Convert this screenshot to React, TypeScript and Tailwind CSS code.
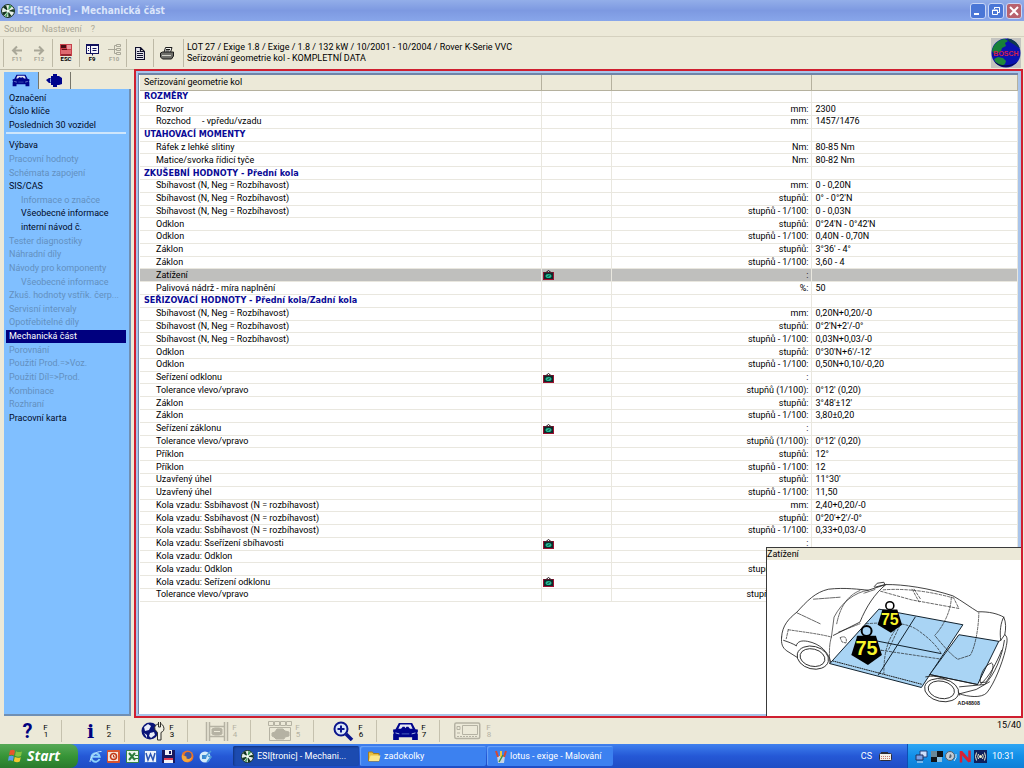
import type { ReactNode } from "react";

type Row = { head?: string; label?: string; icon?: boolean; unit?: string; value?: string; selected?: boolean };

const rows: Row[] = [
  { head: "ROZMĚRY" },
  { label: "Rozvor", unit: "mm:", value: "2300" },
  { label: "Rozchod\u00a0\u00a0\u00a0\u00a0 - vpředu/vzadu", unit: "mm:", value: "1457/1476" },
  { head: "UTAHOVACÍ MOMENTY" },
  { label: "Ráfek z lehké slitiny", unit: "Nm:", value: "80-85 Nm" },
  { label: "Matice/svorka řídicí tyče", unit: "Nm:", value: "80-82 Nm" },
  { head: "ZKUŠEBNÍ HODNOTY - Přední kola" },
  { label: "Sbíhavost (N, Neg = Rozbíhavost)", unit: "mm:", value: "0 - 0,20N" },
  { label: "Sbíhavost (N, Neg = Rozbíhavost)", unit: "stupňů:", value: "0° - 0°2'N" },
  { label: "Sbíhavost (N, Neg = Rozbíhavost)", unit: "stupňů - 1/100:", value: "0 - 0,03N" },
  { label: "Odklon", unit: "stupňů:", value: "0°24'N - 0°42'N" },
  { label: "Odklon", unit: "stupňů - 1/100:", value: "0,40N - 0,70N" },
  { label: "Záklon", unit: "stupňů:", value: "3°36' - 4°" },
  { label: "Záklon", unit: "stupňů - 1/100:", value: "3,60 - 4" },
  { label: "Zatížení", icon: true, unit: ":", selected: true },
  { label: "Palivová nádrž - míra naplnění", unit: "%:", value: "50" },
  { head: "SEŘIZOVACÍ HODNOTY - Přední kola/Zadní kola" },
  { label: "Sbíhavost (N, Neg = Rozbíhavost)", unit: "mm:", value: "0,20N+0,20/-0" },
  { label: "Sbíhavost (N, Neg = Rozbíhavost)", unit: "stupňů:", value: "0°2'N+2'/-0°" },
  { label: "Sbíhavost (N, Neg = Rozbíhavost)", unit: "stupňů - 1/100:", value: "0,03N+0,03/-0" },
  { label: "Odklon", unit: "stupňů:", value: "0°30'N+6'/-12'" },
  { label: "Odklon", unit: "stupňů - 1/100:", value: "0,50N+0,10/-0,20" },
  { label: "Seřízení odklonu", icon: true, unit: ":" },
  { label: "Tolerance vlevo/vpravo", unit: "stupňů (1/100):", value: "0°12' (0,20)" },
  { label: "Záklon", unit: "stupňů:", value: "3°48'±12'" },
  { label: "Záklon", unit: "stupňů - 1/100:", value: "3,80±0,20" },
  { label: "Seřízení záklonu", icon: true, unit: ":" },
  { label: "Tolerance vlevo/vpravo", unit: "stupňů (1/100):", value: "0°12' (0,20)" },
  { label: "Příklon", unit: "stupňů:", value: "12°" },
  { label: "Příklon", unit: "stupňů - 1/100:", value: "12" },
  { label: "Uzavřený úhel", unit: "stupňů:", value: "11°30'" },
  { label: "Uzavřený úhel", unit: "stupňů - 1/100:", value: "11,50" },
  { label: "Kola vzadu: Ssbíhavost (N = rozbíhavost)", unit: "mm:", value: "2,40+0,20/-0" },
  { label: "Kola vzadu: Ssbíhavost (N = rozbíhavost)", unit: "stupňů:", value: "0°20'+2'/-0°" },
  { label: "Kola vzadu: Ssbíhavost (N = rozbíhavost)", unit: "stupňů - 1/100:", value: "0,33+0,03/-0" },
  { label: "Kola vzadu: Sseřízení sbíhavosti", icon: true, unit: ":" },
  { label: "Kola vzadu: Odklon" },
  { label: "Kola vzadu: Odklon", unit: "stupňů - 1/100:" },
  { label: "Kola vzadu: Seřízení odklonu", icon: true },
  { label: "Tolerance vlevo/vpravo", unit: "stupňů (1/100):" },
];

type NavItem = { text: string; on?: boolean; sub?: boolean; active?: boolean };

const shortcuts: NavItem[] = [
  { text: "Označení", on: true },
  { text: "Číslo klíče", on: true },
  { text: "Posledních 30 vozidel", on: true },
];

const sections: NavItem[] = [
  { text: "Výbava", on: true },
  { text: "Pracovní hodnoty" },
  { text: "Schémata zapojení" },
  { text: "SIS/CAS", on: true },
  { text: "Informace o značce", sub: true },
  { text: "Všeobecné informace", on: true, sub: true },
  { text: "interní návod č.", on: true, sub: true },
  { text: "Tester diagnostiky" },
  { text: "Náhradní díly" },
  { text: "Návody pro komponenty" },
  { text: "Všeobecné informace", sub: true },
  { text: "Zkuš. hodnoty vstřik. čerp..." },
  { text: "Servisní intervaly" },
  { text: "Opotřebitelné díly" },
  { text: "Mechanická část", on: true, active: true },
  { text: "Porovnání" },
  { text: "Použití Prod.=>Voz." },
  { text: "Použití Díl=>Prod." },
  { text: "Kombinace" },
  { text: "Rozhraní" },
  { text: "Pracovní karta", on: true },
];

function NavList({ items }: { items: NavItem[] }) {
  return (
    <>
      {items.map((it, i) => (
        <li key={i} className="flex flex-1">
          <button
            type="button"
            disabled={!it.on}
            className={`flex w-full items-center text-left leading-[13px] whitespace-nowrap ${it.sub ? "pl-[15px]" : "pl-[3px]"} ${
              it.active ? "bg-[#00007f] text-white" : it.on ? "text-[#000a28]" : "text-[#6390c0]"
            }`}
          >
            {it.text}
          </button>
        </li>
      ))}
    </>
  );
}

function DiscIcon({ size }: { size: number }) {
  return (
    <svg width={size} height={size} viewBox="0 0 14 14" aria-hidden="true">
      <circle cx="7" cy="7" r="6.5" fill="#e6eee8" stroke="#17321f" strokeWidth="1" />
      <path d="M7 7 2 3.500A6 6 0 0 1 5 1.300ZM7 7l5.500-2A6 6 0 0 1 13 8ZM7 7l3.500 5A6 6 0 0 1 7.500 13ZM7 7 3 11.500A6 6 0 0 1 1 8.500Z" fill="#12331c" />
      <path d="M7 7 8 1a6 6 0 0 1 3 1.500ZM7 7l-1 6a6 6 0 0 1-2-1Z" fill="#3c9a55" />
      <circle cx="7" cy="7" r="1.500" fill="#f5fff5" />
    </svg>
  );
}

function CarFront({ className }: { className: string }) {
  return (
    <svg className={className} viewBox="0 0 28 20" aria-hidden="true">
      <path d="M7 1h14l3.500 6.500L27 8v3h-1l1 2v6h-6v-3H7v3H1v-6l1-2H1V8l2.500-.5Z" fill="#00058c" />
      <path d="M8.500 2.500h11L21.500 7h-15Z" fill="#e4e7f2" />
      <path d="M9 7.500l2-2.500h2l1 1.500L15 5h2l2 2.500Z" fill="#00058c" />
      <path d="M3.500 11.500l4 1M24.500 11.500l-4 1" stroke="#a9b9ea" strokeWidth="1" />
      <path d="M10 12.500h8" stroke="#4a62c0" strokeWidth="1" />
    </svg>
  );
}

function PartIcon() {
  return (
    <svg className="h-[13px] w-[17px]" viewBox="0 0 17 13" aria-hidden="true">
      <path d="M0 6l3-2h2V2h2V0h4v2h2l3 2v6l-3 1h-2v2H7v-2H5V9H3Z" fill="#00058c" />
      <path d="M4.500 4.500v4" stroke="#8a9ce0" strokeWidth="1" />
    </svg>
  );
}

function Camera() {
  return (
    <svg className="block h-[10px] w-[11px]" viewBox="0 0 11 10" role="img" aria-label="Obrázek">
      <path d="M3 2.500 5.500.5 8 2.500" fill="none" stroke="#201018" />
      <rect x="0" y="2" width="11" height="8" fill="#9a1030" />
      <rect x="1" y="2.500" width="9" height="6.500" fill="#0c2a2a" />
      <ellipse cx="5.500" cy="6" rx="3" ry="2" fill="#22b892" />
      <path d="M4.500 7 6.500 5" stroke="#06352c" />
    </svg>
  );
}

function Tool({ label, disabled, children, caption, wide }: { label: string; disabled?: boolean; children: ReactNode; caption?: string; wide?: boolean }) {
  return (
    <button
      type="button"
      aria-label={label}
      disabled={disabled}
      className={`flex h-[28px] flex-col items-center justify-center ${wide ? "w-[26px]" : "w-[22px]"} ${disabled ? "text-[#a9a798]" : "text-black"}`}
    >
      {children}
      {caption && <span className="text-[6px] leading-[6px] font-bold">{caption}</span>}
    </button>
  );
}

function Sep() {
  return <span className="h-[28px] w-px shrink-0 bg-[#bdb9a6]" />;
}

function FLabel({ n }: { n: number }) {
  return (
    <span className="flex w-[7px] shrink-0 flex-col text-[8px] leading-[7px]">
      <span>F</span>
      <span className="pl-px">{n}</span>
    </span>
  );
}

function FKey({ n, disabled, children }: { n: number; disabled?: boolean; children: ReactNode }) {
  return (
    <button
      type="button"
      aria-label={`F${n}`}
      disabled={disabled}
      className={`flex h-[22px] w-[63px] items-center justify-end border-r border-[#c5c1ae] pr-[12px] ${disabled ? "text-[#b5b2a3]" : "text-black"}`}
    >
      <span className="flex w-[29px] justify-center">{children}</span>
      <FLabel n={n} />
    </button>
  );
}

function Weight({ x, y, s }: { x: number; y: number; s: number }) {
  return (
    <g transform={`translate(${x} ${y}) scale(${s})`}>
      <circle cx="0" cy="-48" r="15" fill="none" stroke="#000" strokeWidth="6" />
      <path d="M-28-34H28L46 24 4 54-46 24Z" fill="#000" />
      <text x="0" y="25" textAnchor="middle" fontSize="60" fontWeight="bold" fill="#f8f52a" fontFamily="'Liberation Sans', sans-serif">
        75
      </text>
    </g>
  );
}

function CarDrawing() {
  return (
    <svg className="block w-full" viewBox="20 58 765 470" role="img" aria-label="Zatížení vozidla">
      <g fill="#a9d4f4" stroke="#10202c" strokeWidth="3" strokeLinejoin="round">
        <path d="M357 206 610 253 485 442 209 370Z" />
        <path d="M598 283 718 303 654 433 510 403Z" />
        <path d="M467 229 355 405M290 290 545 340" fill="none" />
      </g>
      <g fill="none" stroke="#1c1c1c" strokeWidth="2.500" strokeLinecap="round">
        <path d="M64 290C66 255 85 235 110 215 140 182 165 155 205 146 255 140 300 147 325 149L378 132C430 131 510 143 580 166 605 180 635 202 655 214 690 213 715 220 733 230 740 245 740 265 736 283 748 290 742 310 738 330 728 370 705 430 682 458 665 475 625 470 600 461" />
        <path d="M64 290C62 310 66 322 80 332L112 352M70 300C85 305 98 310 108 316" />
        <path d="M108 316C112 302 125 300 142 303 180 310 205 335 212 365" />
        <path d="M343 138 352 128 372 125 375 132 345 140" />
        <path d="M378 132C345 158 318 200 300 245L220 285" />
        <path d="M325 149C285 155 245 185 222 230L214 290" strokeWidth="2" />
        <path d="M300 150C262 165 240 200 230 250M236 275 300 250" strokeWidth="2" strokeDasharray="8 3" />
        <path d="M110 217 180 250M214 290C206 315 208 345 209 370M345 147 312 158M160 176 240 170" strokeWidth="2" strokeDasharray="14 3" />
        <path d="M84 268C130 275 175 280 214 290M84 268 78 295M240 292C255 285 262 292 258 308L246 305Z" strokeWidth="2" strokeDasharray="7 4" />
        <path d="M362 152 455 178 598 204 582 172M457 146 478 184M463 146 484 178M370 148C440 142 520 155 580 172" strokeWidth="2" strokeDasharray="8 5" />
        <path d="M575 170C575 210 550 260 525 285 550 315 575 345 595 357L632 345C645 325 657 270 658 217" strokeWidth="2" strokeDasharray="8 4" />
        <path d="M318 250C390 245 440 245 475 270 510 295 530 315 545 340M365 330 540 356M405 270C378 310 372 350 372 400M420 255 385 330M318 345 365 330" strokeWidth="2" strokeDasharray="7 5" />
        <path d="M218 362 485 432" strokeWidth="3" strokeDasharray="3 4" />
        <path d="M733 230C724 245 720 275 724 300M736 283 724 300 718 303M735 300C728 350 705 405 675 433L600 440M727 330C710 370 690 410 662 433M662 426C660 405 675 375 696 368 706 372 700 400 680 425Z" />
        <path d="M498 410C540 400 590 425 600 465M510 403 654 433M600 461 650 448 690 425" />
      </g>
      <g fill="#fff" stroke="#1c1c1c" strokeWidth="2.500">
        <ellipse cx="158" cy="352" rx="48" ry="34" transform="rotate(14 158 352)" />
        <ellipse cx="157" cy="352" rx="38" ry="26" transform="rotate(14 157 352)" />
        <ellipse cx="546" cy="450" rx="52" ry="34" transform="rotate(12 546 450)" />
        <ellipse cx="545" cy="449" rx="40" ry="26" transform="rotate(12 545 449)" />
      </g>
      <Weight x={390} y={234} s={0.8} />
      <Weight x={320} y={320} s={1} />
      <text x="594" y="494" fontSize="16" fontWeight="bold" fill="#222" fontFamily="'Liberation Sans', sans-serif">
        AD48808
      </text>
    </svg>
  );
}

function Globe() {
  return (
    <svg className="block h-[30px] w-[30px] bg-[#c4c4c0]" viewBox="0 0 30 30" role="img" aria-label="BOSCH">
      <circle cx="15" cy="15" r="14.500" fill="#0a12b0" />
      <path d="M16 .6a14.500 14.500 0 0 1 13 10l-6-4-5-3Z" fill="#0e3a4c" />
      <path d="M1 13C2 6 8 1 14 1l3 2-3 2 1 3-4 2-1 3-3 2-2-1-2 2Z" fill="#178038" />
      <path d="M7 19l5 1 3 3-1 3-3 2C7 27 4 24 3 21Z" fill="#1f8a3a" />
      <path d="M3 23c5 5 15 6 23 1-4 5-17 8-23-1Z" fill="#060c50" />
      <text x="15" y="18" textAnchor="middle" fontSize="7" fontWeight="bold" fill="#d0204c" fontFamily="'Liberation Sans', sans-serif">
        BOSCH
      </text>
    </svg>
  );
}

function TitleButton({ label, close, children }: { label: string; close?: boolean; children: ReactNode }) {
  return (
    <button
      type="button"
      aria-label={label}
      className={`flex h-[16px] w-[16px] items-center justify-center rounded-[3px] border border-[#c9d6f6] ${close ? "bg-[#b8626e]" : "bg-[#4a76d6]"}`}
    >
      <svg className="h-[12px] w-[12px]" viewBox="0 0 12 12" fill="none" stroke="#fff" aria-hidden="true">
        {children}
      </svg>
    </button>
  );
}

function Quick({ label, children }: { label: string; children: ReactNode }) {
  return (
    <button type="button" aria-label={label} className="flex flex-1 justify-center">
      <svg className="h-[13px] w-[13px]" viewBox="0 0 13 13" aria-hidden="true">
        {children}
      </svg>
    </button>
  );
}

function Task({ active, icon, children }: { active?: boolean; icon: ReactNode; children: ReactNode }) {
  return (
    <button
      type="button"
      className={`flex h-[20px] w-[126px] items-center gap-[3px] rounded-[2px] pl-[8px] text-left whitespace-nowrap text-white ${
        active ? "bg-[#1c4bb0] shadow-[inset_1px_1px_2px_#12347f]" : "bg-[#3c81f0] shadow-[inset_1px_1px_1px_#6ba2f8]"
      }`}
    >
      {icon}
      <span>{children}</span>
    </button>
  );
}

export default function App() {
  return (
    <div className="flex min-h-screen flex-col bg-[#ece9d8] font-['Roboto','Liberation_Sans',sans-serif] text-[9px] leading-[12px] text-black">
      <header className="flex h-[21px] shrink-0 items-center bg-linear-to-b from-[#93aee9] via-[#7d99e1] to-[#88a6ea] pr-[2px] pl-[1px]">
        <DiscIcon size={14} />
        <h1 className="flex-1 pl-[2px] font-['DejaVu_Sans_Condensed','Noto_Sans',sans-serif] text-[10px] font-bold text-[#dbe5fa]">ESI[tronic] - Mechanická část</h1>
        <div className="flex gap-[2px]">
          <TitleButton label="Minimalizovat">
            <path d="M2 9h5" strokeWidth="2" />
          </TitleButton>
          <TitleButton label="Obnovit">
            <path d="M4.500 4V2.500h5v5H8M2.500 5h5v4.500h-5ZM2.500 5.500h5M4.500 2.500h5" />
          </TitleButton>
          <TitleButton label="Zavřít" close>
            <path d="m2 2 8 8M10 2l-8 8" strokeWidth="2" />
          </TitleButton>
        </div>
      </header>

      <nav className="flex h-[16px] shrink-0 items-center gap-[9px] border-b border-[#d5d1bf] pl-[4px] text-[#aaa797]">
        <button type="button" disabled>Soubor</button>
        <button type="button" disabled>Nastavení</button>
        <button type="button" disabled>?</button>
      </nav>

      <div className="flex h-[32px] shrink-0 items-center pr-[3px] pl-[3px]">
        <Sep />
        <div className="flex w-[48px] justify-center">
          <Tool label="Zpět F11" caption="F11" disabled>
            <svg className="h-[11px] w-[12px]" viewBox="0 0 12 11" fill="none" stroke="currentColor" strokeWidth="2" aria-hidden="true">
              <path d="M2 5.500h9M6 1.500l-4 4 4 4" />
            </svg>
          </Tool>
          <Tool label="Vpřed F12" caption="F12" disabled>
            <svg className="h-[11px] w-[12px]" viewBox="0 0 12 11" fill="none" stroke="currentColor" strokeWidth="2" aria-hidden="true">
              <path d="M1 5.500h9M6 1.500l4 4-4 4" />
            </svg>
          </Tool>
        </div>
        <Sep />
        <Tool label="ESC" caption="ESC" wide>
          <svg className="h-[12px] w-[12px]" viewBox="0 0 12 12" aria-hidden="true">
            <rect width="12" height="12" fill="#c8404a" />
            <path d="M1 1h5v3H1Z" fill="#4a0c14" />
            <path d="M7 1h4v4H7Z" fill="#e8949a" />
            <path d="M1 6h10v4H1Z" fill="#e06a70" />
            <path d="M2 5.500h5M1 11h10" stroke="#6c1018" />
          </svg>
        </Tool>
        <Sep />
        <div className="flex w-[46px] justify-center">
          <Tool label="F9" caption="F9">
            <svg className="h-[12px] w-[13px]" viewBox="0 0 13 12" fill="none" stroke="#10105c" aria-hidden="true">
              <rect x=".5" y=".5" width="12" height="9" fill="#f4f4fa" />
              <path d="M1 1.500h11M4.500 2v8M6.500 4.500h4M6.500 6.500h4M2 4.500h1M2 6.500h1M6.500 9.500v2" />
            </svg>
          </Tool>
          <Tool label="F10" caption="F10" disabled>
            <svg className="h-[12px] w-[13px]" viewBox="0 0 13 12" fill="none" stroke="currentColor" aria-hidden="true">
              <path d="M0 5.500h6M6.500 1.500v8M6.500 1.500H8M6.500 9.500H8M6 5.500h2M8.500.5h4v2h-4ZM8.500 4.500h4v2h-4ZM8.500 8.500h4v2h-4Z" />
            </svg>
          </Tool>
        </div>
        <Sep />
        <Tool label="Dokument" wide>
          <svg className="h-[13px] w-[10px]" viewBox="0 0 10 13" fill="#e6e6ee" stroke="#10102c" aria-hidden="true">
            <path d="M.5.5h5l4 4v8H.5ZM5.500.5v4h4" strokeWidth="1.200" />
            <path d="M2 4.500h2.500M2 6.500h6M2 8.500h6M2 10.500h6" />
          </svg>
        </Tool>
        <Sep />
        <div className="flex w-[29px] justify-center pr-[4px]">
          <Tool label="Tisk">
            <svg className="h-[13px] w-[14px]" viewBox="0 0 14 13" fill="#6e6e6a" stroke="#1c1c1c" aria-hidden="true">
              <path d="M4 5.500 5.500.5H12L10.500 5.500Z" fill="#f4f4f0" />
              <path d="M6 2.500h4M5.500 4h4" />
              <path d="M.5 6 2.500 5h11v4l-2 3H2.500l-2-2Z" />
              <path d="M2 8.500h9" stroke="#d0d0c8" />
            </svg>
          </Tool>
        </div>
        <Sep />
        <div className="flex-1 pl-[3px] leading-[11px]">
          <p>LOT 27 / Exige 1.8 / Exige / 1.8 / 132 kW / 10/2001 - 10/2004 / Rover K-Serie VVC</p>
          <p>Seřizování geometrie kol - KOMPLETNÍ DATA</p>
        </div>
        <Globe />
      </div>

      <div className="flex flex-1">
        <aside className="flex w-[134px] shrink-0 flex-col border-t border-[#bcb8a5] pt-[2px] pr-[3px] pb-[2px] pl-[4px]">
          <div className="flex h-[17px]">
            <button type="button" aria-label="Vozidlo" className="flex w-[34px] items-center justify-center bg-[#80bfff]">
              <CarFront className="h-[13px] w-[18px]" />
            </button>
            <button type="button" aria-label="Díly" className="flex w-[33px] items-center justify-center border-r border-l border-[#77756a]">
              <PartIcon />
            </button>
          </div>
          <div className="flex flex-1 flex-col border-r-2 border-b-2 border-[#6f8fb4] bg-[#80bfff] pr-[3px] pl-[2px]">
            <div className="border-b-2 border-[#cfe6fb] pt-[3px]">
              <ul className="flex min-h-[40px] flex-col">
                <NavList items={shortcuts} />
              </ul>
            </div>
            <ul className="mt-[5px] flex min-h-[286px] flex-col">
              <NavList items={sections} />
            </ul>
          </div>
        </aside>

        <main className="relative mr-px flex flex-1 border-2 border-[#cf1f30] bg-[#a9c4ea] pt-[2px] pr-[3px] pb-[2px] pl-[2px]">
          <div className="flex-1 border-t-2 border-l border-[#6f84a8] bg-white pl-px">
            <table className="h-[527px] w-full table-fixed border-collapse">
              <colgroup>
                <col className="w-[401px]" />
                <col className="w-[70px]" />
                <col className="w-[200px]" />
                <col />
              </colgroup>
              <thead>
                <tr className="h-[15px] bg-[#ece9d8] text-left [&>th]:border-r [&>th]:border-b [&>th]:border-[#b5b19e]">
                  <th scope="col" className="pl-[4px] font-normal">Seřizování geometrie kol</th>
                  <th scope="col" aria-label="Obrázek" />
                  <th scope="col" aria-label="Jednotka" />
                  <th scope="col" aria-label="Hodnota" />
                </tr>
              </thead>
              <tbody>
                {rows.map((r, i) => (
                  <tr
                    key={i}
                    className={`[&>td]:border-r [&>td]:border-b [&>td]:border-[#e9e7df] [&>td]:p-0 ${r.selected ? "bg-[#bfbfbd]" : ""}`}
                  >
                    <td className="whitespace-nowrap">
                      {r.head ? (
                        <strong className="block pl-[4px] font-['DejaVu_Sans_Condensed','Noto_Sans',sans-serif] leading-[11px] text-[#0a0a96]">{r.head}</strong>
                      ) : (
                        <span className="block pl-[16px] leading-[11px]">{r.label}</span>
                      )}
                    </td>
                    <td>
                      {r.icon && (
                        <div className="pl-[1px]">
                          <Camera />
                        </div>
                      )}
                    </td>
                    <td className="text-right">
                      <span className="block pr-[2px] leading-[11px]">{r.unit}</span>
                    </td>
                    <td>
                      <span className="block pl-[4px] leading-[11px]">{r.value}</span>
                    </td>
                  </tr>
                ))}
              </tbody>
            </table>
          </div>
          <section className="absolute right-0 bottom-0 w-[255px] border-t border-l border-[#3a3a3a] bg-white">
            <h2 className="bg-[#ece9d8] leading-[12px]">Zatížení</h2>
            <CarDrawing />
          </section>
        </main>
      </div>

      <footer className="shrink-0">
        <div className="flex h-[26px] items-center">
          <div className="flex flex-1">
            <div className="-ml-px flex">
              <FKey n={1}>
                <b className="text-[20px] leading-[20px] text-[#00007f]">?</b>
              </FKey>
              <FKey n={2}>
                <b className="font-['DejaVu_Serif',serif] text-[19px] leading-[20px] text-[#00007f]">i</b>
              </FKey>
              <FKey n={3}>
                <svg className="h-[20px] w-[25px]" viewBox="0 0 25 20" aria-hidden="true">
                  <circle cx="9" cy="10" r="8.500" fill="#0a1478" />
                  <path d="M3 6l4-3 3 2-2 4-4 1ZM9 12l4-1 1 3-4 3-2-2ZM3 12l3 2v3Z" fill="#e8ecf8" />
                  <path d="M14 8.500a4.500 4.500 0 1 1 6 3V19h-3.500v-7.500Z" fill="#f2f0e4" stroke="#30302c" />
                  <path d="M17.500 1v5h2V1" fill="#ece9d8" stroke="#30302c" />
                </svg>
              </FKey>
              <FKey n={4} disabled>
                <svg className="h-[19px] w-[24px]" viewBox="0 0 24 19" fill="none" stroke="currentColor" aria-hidden="true">
                  <path d="M1.500 0v19M4.500 0v19M19.500 0v19M22.500 0v19M4.500 4.500h15M4.500 14.500h15" strokeWidth="1.500" />
                  <path d="M7 7l3-1h4l3 1v5l-3 1h-4l-3-1Z" fill="currentColor" />
                  <path d="M9 9.500h6" stroke="#ece9d8" />
                </svg>
              </FKey>
              <FKey n={5} disabled>
                <svg className="h-[20px] w-[24px]" viewBox="0 0 24 20" fill="none" stroke="currentColor" aria-hidden="true">
                  <path d="M.5.5h5v4h-5ZM6.500.5h5v4h-5ZM12.500.5h5v4h-5ZM18.500.5h5v4h-5ZM1.500 6.500h21v13h-21Z" />
                  <path d="M4 12l3-1 2-3h6l2 2 4 1v4l-4 1-1 2H8l-2-2-2-1Z" fill="currentColor" />
                </svg>
              </FKey>
              <FKey n={6}>
                <svg className="h-[20px] w-[22px]" viewBox="0 0 22 20" fill="none" stroke="#0a148c" aria-hidden="true">
                  <circle cx="9" cy="8" r="6.500" strokeWidth="2" fill="#dce8f8" />
                  <path d="M9 4.500v7M5.500 8h7" strokeWidth="2" />
                  <path d="m14 13 6 6" strokeWidth="3.500" />
                </svg>
              </FKey>
              <FKey n={7}>
                <CarFront className="h-[19px] w-[27px]" />
              </FKey>
              <button type="button" aria-label="F8" disabled className="flex h-[22px] items-center gap-1 pl-[14px] text-[#b5b2a3]">
                <svg className="h-[18px] w-[27px]" viewBox="0 0 27 18" fill="none" stroke="currentColor" aria-hidden="true">
                  <rect x=".750" y="1" width="25" height="15.500" rx="1.500" strokeWidth="1.500" />
                  <path d="M8.500 3.500h15v9h-15ZM3 4.500h3v3H3ZM3 11h3" />
                  <path d="M3 14.500h20" strokeDasharray="2 1" />
                </svg>
                <FLabel n={8} />
              </button>
            </div>
          </div>
          <span className="self-start pt-px pr-[3px]">15/40</span>
        </div>

        <div className="flex h-[24px] items-center bg-linear-to-b from-[#3f80ee] via-[#2558d6] to-[#1f4dc4] text-white">
          <button
            type="button"
            className="flex h-full w-[78px] items-center gap-[4px] rounded-r-[8px] bg-linear-to-b from-[#57a957] via-[#379537] to-[#2a7a2c] pl-[8px] font-['Noto_Sans',sans-serif] text-[14px] leading-[16px] font-bold italic"
          >
            <svg className="h-[14px] w-[15px]" viewBox="0 0 15 14" aria-hidden="true">
              <path d="M2 1.500q3-1.500 5 .3L6 6.500Q4 5 1 6.200Z" fill="#e8552c" />
              <path d="M8 2.200q3 1.600 6 .3L13 7q-3 1.400-6-.2Z" fill="#86c440" />
              <path d="M.8 7.300q3-1.400 5 .2L4.800 12Q2.500 10.600 0 11.800Z" fill="#5a9af0" />
              <path d="M6.800 8q3 1.500 6 .2L11.800 12.600q-3 1.300-6-.3Z" fill="#f4c830" />
            </svg>
            Start
          </button>
          <div className="flex w-[146px] pr-[9px] pl-[8px]">
            <Quick label="Internet Explorer">
              <path d="M10.500 9A4.200 4.200 0 1 1 10.700 6.800H3" fill="none" stroke="#8cd0fa" strokeWidth="2" />
              <path d="M1 12C1 7 7 1 12.500 1.500" fill="none" stroke="#c4e4fc" />
            </Quick>
            <Quick label="Outlook">
              <rect width="13" height="13" rx="1" fill="#d9532e" />
              <rect x="1" y="2" width="10" height="9" fill="#f8e4d8" />
              <circle cx="6.500" cy="6.500" r="3" fill="none" stroke="#c03818" strokeWidth="1.500" />
              <path d="M6.500 5v2H8" fill="none" stroke="#c03818" />
            </Quick>
            <Quick label="Excel">
              <rect width="13" height="13" rx="1" fill="#358448" />
              <rect x="1" y="1" width="11" height="11" fill="#eaf6ec" />
              <path d="m3 3 6 7M9 3l-6 7" stroke="#2c7c3c" strokeWidth="2" />
              <path d="M9 8.500h3M9 5.500h3" stroke="#2c7c3c" />
            </Quick>
            <Quick label="Word">
              <rect width="13" height="13" rx="1" fill="#3c6cc8" />
              <rect x="1" y="1" width="11" height="11" fill="#eef3fc" />
              <path d="m2 3 2 7 2.500-6L9 10l2-7" fill="none" stroke="#2a54b4" strokeWidth="1.500" />
            </Quick>
            <Quick label="Uložit">
              <path d="M0 0h13v13H0Z" fill="#181860" />
              <path d="M3 0h7v5H3Z" fill="#f2f2f8" />
              <path d="M7 1h2v3H7Z" fill="#181860" />
              <path d="M2 8h9v5H2Z" fill="#f2f2f8" />
              <path d="M2 8h9v2H2Z" fill="#e04058" />
            </Quick>
            <Quick label="Firefox">
              <circle cx="6.500" cy="6.500" r="6" fill="#e8742a" />
              <circle cx="7" cy="5.500" r="3.500" fill="#3a58a8" />
              <path d="M1 3c0 2 1 3 3 3l2 1-1 1c2 2 4 1 6-1-1 6-9 7-10 1Z" fill="#f4a83c" />
            </Quick>
            <Quick label="Outlook Express">
              <circle cx="6" cy="7" r="5.500" fill="#d4ecfa" />
              <path d="M3 5h5l-1 4H3Z" fill="#3a8ad0" />
              <path d="m6 7 6-6M9 6l3 1-4 5" stroke="#4a9ad8" fill="none" strokeWidth="1.500" />
            </Quick>
          </div>
          <div className="flex flex-1 gap-px pl-[9px]">
            <Task active icon={<DiscIcon size={13} />}>
              ESI[tronic] - Mechani...
            </Task>
            <Task
              icon={
                <svg className="h-[12px] w-[13px]" viewBox="0 0 13 12" aria-hidden="true">
                  <path d="M.5 2h4l1 1.500H11V11H.5Z" fill="#e8c040" stroke="#a87c18" />
                  <path d="M2.500 5.500h10L11 11H.8Z" fill="#fbe78c" />
                </svg>
              }
            >
              zadokolky
            </Task>
            <Task
              icon={
                <svg className="h-[13px] w-[12px]" viewBox="0 0 12 13" aria-hidden="true">
                  <path d="M2 6h8l-1 7H3Z" fill="#c8d4e4" />
                  <path d="M3 7 1 1M9 7l2-6" stroke="#d84830" strokeWidth="2" />
                  <path d="M6 7V1" stroke="#f0c840" strokeWidth="2" />
                  <path d="M4 12 8 5" stroke="#3c9048" strokeWidth="1.500" />
                </svg>
              }
            >
              lotus - exige - Malování
            </Task>
          </div>
          <button type="button" className="pr-[7px]">CS</button>
          <svg className="mr-[15px] h-[9px] w-[13px]" viewBox="0 0 13 9" aria-hidden="true">
            <path d="M2 .5h7" stroke="#2c2c38" />
            <rect x=".5" y="1.500" width="12" height="7" rx="1" fill="#f2f0ea" stroke="#2c2c38" />
            <path d="M2 4.500h9M2 6.500h9" stroke="#c87870" strokeDasharray="1 1" />
          </svg>
          <div className="flex h-full w-[117px] items-center border-l border-[#0c4fb4] bg-linear-to-b from-[#2ea6f4] via-[#1290e8] to-[#0f7fd6] pl-[6px]">
            <div className="flex w-[74px]">
              <Quick label="Síť">
                <path d="M5 1h7v6H5Z" fill="#cfe0fc" stroke="#24407c" />
                <path d="M1 5h7v5H1Z" fill="#7ca0e4" stroke="#24305c" />
                <path d="M2 12h6" stroke="#e0e8f8" />
              </Quick>
              <Quick label="Displej">
                <path d="M1 1h6v6H1Z" fill="#6a8898" />
                <path d="M7 1h6v6H7ZM1 7h6v5H1Z" fill="#101418" />
                <path d="M7 7h5v5H7Z" fill="#8cc0e0" />
              </Quick>
              <Quick label="Hlasitost">
                <circle cx="6" cy="6" r="4.500" fill="#c4ccd4" stroke="#50606c" />
                <path d="M6 4a2 2 0 1 1-1 4Z" fill="#506070" />
                <path d="M10 11q3-3 2-7" fill="none" stroke="#dce8f4" />
              </Quick>
              <Quick label="Norton">
                <path d="M2 1v11.500M10.500.5V12" stroke="#d82034" strokeWidth="2.500" />
                <path d="m2 2 8.500 9.500" stroke="#d82034" strokeWidth="3" />
              </Quick>
              <Quick label="Bezdrátové připojení">
                <rect width="13" height="13" fill="#10205c" />
                <circle cx="6.500" cy="6.500" r="1.500" fill="#f4f4c8" />
                <path d="M4.500 4q-1.500 2.500 0 5M8.500 4q1.500 2.500 0 5M2.500 2.500q-2 4 0 8M10.500 2.500q2 4 0 8" fill="none" stroke="#f0f0d0" />
              </Quick>
            </div>
            <time className="pl-[4px]">10:31</time>
          </div>
        </div>
      </footer>
    </div>
  );
}
